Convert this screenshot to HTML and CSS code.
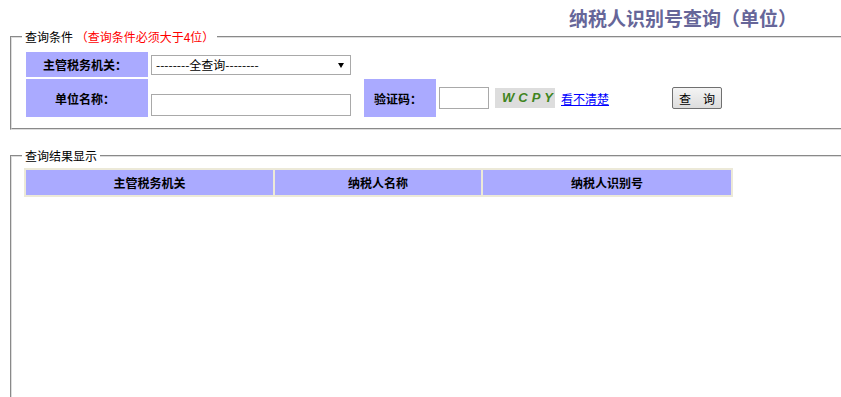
FILE: index.html
```html
<!DOCTYPE html>
<html lang="zh-CN">
<head>
<meta charset="UTF-8">
<meta name="viewport" content="width=device-width, initial-scale=1.0">
<title>纳税人识别号查询（单位）</title>
<link rel="stylesheet" href="styles.css">
</head>
<body>

<div class="title">纳税人识别号查询（单位）</div>

<!-- 查询条件 -->
<fieldset class="box query-box">
  <legend>查询条件&nbsp;<span class="hint">（查询条件必须大于4位）</span></legend>
  <div class="query-grid">
    <div class="label">主管税务机关：</div>
    <div class="field field-wide">
      <span class="select-wrap">
        <select class="org-select">
          <option>--------全查询--------</option>
        </select>
      </span>
    </div>

    <div class="label">单位名称：</div>
    <div class="field field-bottom">
      <input type="text" class="name-input">
    </div>
    <div class="label">验证码：</div>
    <div class="field field-code">
      <input type="text" class="code-input">
      <span class="captcha">WCPY</span>
      <a href="#" class="refresh">看不清楚</a>
      <button class="btn-query">查　询</button>
    </div>
  </div>
</fieldset>

<!-- 查询结果 -->
<fieldset class="box result-box">
  <legend>查询结果显示</legend>
  <table class="result-table">
    <thead>
      <tr>
        <th class="col-org">主管税务机关</th>
        <th class="col-name">纳税人名称</th>
        <th class="col-id">纳税人识别号</th>
      </tr>
    </thead>
    <tbody>
      <!-- 查询结果 -->
    </tbody>
  </table>
</fieldset>

</body>
</html>
```

FILE: styles.css
```css
html, body {
  overflow: hidden;
}

body {
  font-family: "Noto Sans CJK SC", sans-serif;
  font-size: 12px;
  color: #000;
  background-color: #fff;
  margin: 0;
  padding: 0;
}

/* Title */
.title {
  height: 30px;
  box-sizing: border-box;
  padding: 8px 44px 0 0;
  line-height: 20px;
  text-align: right;
  font-size: 19px;
  font-weight: bold;
  color: #666699;
}

/* Fieldsets */
.box {
  margin: 0 -20px 0 10px;
  border: 2px groove #dddddd;
  padding: 8px 0 11px 10px;
  min-width: 0;
}

.box legend {
  padding: 0 3px;
  line-height: 14px;
}

.hint {
  color: #ff0000;
}

/* Query form */
.query-grid {
  display: grid;
  grid-template-columns: 122px 212px 72px 1fr;
  grid-template-rows: 25px 38px;
  gap: 2px;
  margin-left: 4px;
}

.label {
  display: flex;
  align-items: center;
  justify-content: center;
  padding-right: 4px;
  background-color: #aaaaff;
  font-weight: bold;
}

.field {
  display: flex;
  align-items: center;
  padding-left: 1px;
}

.field-wide {
  grid-column: 2 / -1;
}

.field-bottom {
  align-items: flex-end;
  padding-bottom: 1px;
}

.select-wrap {
  position: relative;
  display: inline-block;
}

.select-wrap::after {
  content: "";
  position: absolute;
  right: 7px;
  top: 8px;
  border-left: 3px solid transparent;
  border-right: 3px solid transparent;
  border-top: 5px solid #000;
  pointer-events: none;
}

.org-select {
  appearance: none;
  -webkit-appearance: none;
  display: block;
  width: 200px;
  height: 20px;
  margin: 0;
  padding: 0 0 0 4px;
  border: 1px solid #a9a9a9;
  border-radius: 0;
  background-color: #fff;
  font-family: inherit;
  font-size: 12px;
  color: #000;
}

.name-input {
  width: 200px;
  height: 22px;
  box-sizing: border-box;
  margin: 0;
  border: 1px solid #a9a9a9;
}

.code-input {
  width: 50px;
  height: 22px;
  box-sizing: border-box;
  margin: 0;
  border: 1px solid #a9a9a9;
}

.captcha {
  display: inline-block;
  width: 60px;
  height: 20px;
  box-sizing: border-box;
  margin-left: 6px;
  padding-left: 7px;
  line-height: 20px;
  background-color: #dddddd;
  font-family: "Liberation Sans", sans-serif;
  font-size: 13px;
  font-weight: bold;
  font-style: italic;
  letter-spacing: 4px;
  color: #3f8420;
}

.refresh {
  margin-left: 6px;
  color: #0000ff;
}

.btn-query {
  width: 50px;
  height: 22px;
  margin: 0 0 0 63px;
  padding: 0;
  border: 1px solid #707070;
  border-radius: 2px;
  background: linear-gradient(#f4f4f4, #dddddd);
  font-family: inherit;
  font-size: 12px;
  color: #000;
}

/* Result */
.result-box {
  margin-top: 19px;
  padding-top: 5px;
  min-height: 260px;
}

.result-table {
  margin-left: 2px;
  border-collapse: separate;
  border-spacing: 2px;
  background-color: #ece9d8;
}

.result-table th {
  height: 25px;
  padding: 0;
  background-color: #aaaaff;
  font-weight: bold;
  text-align: center;
}

.col-org {
  width: 247px;
}

.col-name {
  width: 206px;
}

.col-id {
  width: 248px;
}
```
